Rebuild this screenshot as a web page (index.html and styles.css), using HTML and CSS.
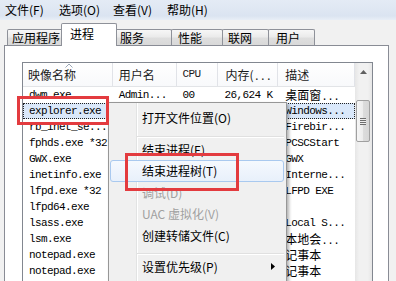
FILE: index.html
```html
<!DOCTYPE html>
<html lang="zh-CN">

<head>
    <meta charset="UTF-8">
    <meta name="viewport" content="width=device-width, initial-scale=1.0">
    <title>Windows 任务管理器</title>
    <link rel="stylesheet" href="styles.css">
</head>

<body>
    <div class="window">
        <div class="menubar">
            <span class="menubar-item">文件(F)</span>
            <span class="menubar-item">选项(O)</span>
            <span class="menubar-item">查看(V)</span>
            <span class="menubar-item">帮助(H)</span>
        </div>

        <div class="tabs">
            <div class="tab tab-apps">应用程序</div>
            <div class="tab tab-active">进程</div>
            <div class="tab tab-services">服务</div>
            <div class="tab tab-perf">性能</div>
            <div class="tab tab-net">联网</div>
            <div class="tab tab-users">用户</div>
        </div>

        <div class="panel">
            <div class="listview">
                <div class="lv-main">
                    <div class="lv-header">
                        <div class="col col-name">
                            <svg class="sort-arrow" width="8" height="5" viewBox="0 0 8 5">
                                <polyline points="0.5,4.5 4,1 7.5,4.5" fill="none" stroke="#9aa6b6" stroke-width="1"/>
                            </svg>
                            映像名称
                        </div>
                        <div class="col col-user">用户名</div>
                        <div class="col col-cpu mono">CPU</div>
                        <div class="col col-mem">内存(<span class="mono">...</span></div>
                        <div class="col col-desc">描述</div>
                    </div>

                    <div class="lv-body">
                        <div class="row">
                            <div class="col col-name">dwm.exe</div>
                            <div class="col col-user">Admin...</div>
                            <div class="col col-cpu">00</div>
                            <div class="col col-mem">26,624 K</div>
                            <div class="col col-desc"><span class="cjk">桌面窗</span>...</div>
                        </div>
                        <div class="row row-selected">
                            <div class="col col-name">explorer.exe</div>
                            <div class="col col-user"></div>
                            <div class="col col-cpu"></div>
                            <div class="col col-mem"></div>
                            <div class="col col-desc">Windows...</div>
                        </div>
                        <div class="row">
                            <div class="col col-name">rb_inet_se...</div>
                            <div class="col col-user"></div>
                            <div class="col col-cpu"></div>
                            <div class="col col-mem"></div>
                            <div class="col col-desc">Firebir...</div>
                        </div>
                        <div class="row">
                            <div class="col col-name">fphds.exe *32</div>
                            <div class="col col-user"></div>
                            <div class="col col-cpu"></div>
                            <div class="col col-mem"></div>
                            <div class="col col-desc">PCSCStart</div>
                        </div>
                        <div class="row">
                            <div class="col col-name">GWX.exe</div>
                            <div class="col col-user"></div>
                            <div class="col col-cpu"></div>
                            <div class="col col-mem"></div>
                            <div class="col col-desc">GWX</div>
                        </div>
                        <div class="row">
                            <div class="col col-name">inetinfo.exe</div>
                            <div class="col col-user"></div>
                            <div class="col col-cpu"></div>
                            <div class="col col-mem"></div>
                            <div class="col col-desc">Interne...</div>
                        </div>
                        <div class="row">
                            <div class="col col-name">lfpd.exe *32</div>
                            <div class="col col-user"></div>
                            <div class="col col-cpu"></div>
                            <div class="col col-mem"></div>
                            <div class="col col-desc">LFPD EXE</div>
                        </div>
                        <div class="row">
                            <div class="col col-name">lfpd64.exe</div>
                            <div class="col col-user"></div>
                            <div class="col col-cpu"></div>
                            <div class="col col-mem"></div>
                            <div class="col col-desc"></div>
                        </div>
                        <div class="row">
                            <div class="col col-name">lsass.exe</div>
                            <div class="col col-user"></div>
                            <div class="col col-cpu"></div>
                            <div class="col col-mem"></div>
                            <div class="col col-desc">Local S...</div>
                        </div>
                        <div class="row">
                            <div class="col col-name">lsm.exe</div>
                            <div class="col col-user"></div>
                            <div class="col col-cpu"></div>
                            <div class="col col-mem"></div>
                            <div class="col col-desc"><span class="cjk">本地会</span>...</div>
                        </div>
                        <div class="row">
                            <div class="col col-name">notepad.exe</div>
                            <div class="col col-user"></div>
                            <div class="col col-cpu"></div>
                            <div class="col col-mem"></div>
                            <div class="col col-desc"><span class="cjk">记事本</span></div>
                        </div>
                        <div class="row">
                            <div class="col col-name">notepad.exe</div>
                            <div class="col col-user"></div>
                            <div class="col col-cpu"></div>
                            <div class="col col-mem"></div>
                            <div class="col col-desc"><span class="cjk">记事本</span></div>
                        </div>
                    </div>
                </div>

                <div class="scrollbar">
                    <div class="sb-button">
                        <svg width="7" height="4" viewBox="0 0 7 4">
                            <polygon points="0,4 3.5,0 7,4" fill="#606060"/>
                        </svg>
                    </div>
                    <div class="sb-thumb">
                        <span class="grip"></span>
                    </div>
                </div>
            </div>
        </div>

        <!-- 右键菜单 -->
        <div class="context-menu">
            <div class="menu-item">打开文件位置(O)</div>
            <div class="menu-sep"></div>
            <div class="menu-item">结束进程(E)</div>
            <div class="menu-item menu-item-hover">结束进程树(T)</div>
            <div class="menu-item menu-item-disabled">调试(D)</div>
            <div class="menu-item menu-item-disabled">UAC 虚拟化(V)</div>
            <div class="menu-item">创建转储文件(C)</div>
            <div class="menu-sep"></div>
            <div class="menu-item menu-item-sub">
                设置优先级(P)
                <svg width="4" height="7" viewBox="0 0 4 7">
                    <polygon points="0,0 4,3.5 0,7" fill="#000"/>
                </svg>
            </div>
        </div>

        <!-- 标注框 -->
        <div class="mark mark-process"></div>
        <div class="mark mark-tree"></div>
    </div>
</body>

</html>
```

FILE: styles.css
```css
* {
    box-sizing: border-box;
}

body {
    margin: 0;
    width: 396px;
    height: 281px;
    overflow: hidden;
    font-family: "Noto Sans CJK SC", "Liberation Sans", sans-serif;
    font-size: 12px;
    color: #000;
    background: #f0f0f0;
}

.window {
    position: relative;
    width: 396px;
    height: 281px;
    overflow: hidden;
    background: #f1f1f1;
}

.menubar {
    display: flex;
    height: 20px;
    padding-left: 5px;
    line-height: 20px;
    background: linear-gradient(#e4ebf5, #dbe4f1 80%, #e8eef7);
}

.menubar-item {
    width: 54px;
    white-space: nowrap;
}

.tabs {
    display: flex;
    align-items: flex-end;
    height: 25px;
    padding-left: 7px;
}

.tab {
    height: 16px;
    margin-right: -1px;
    padding-left: 4px;
    border: 1px solid #8e9199;
    border-bottom: none;
    border-radius: 2px 2px 0 0;
    line-height: 15px;
    white-space: nowrap;
    background: linear-gradient(#f7f7f7, #ebebeb 45%, #dedede 55%, #d9d9d9);
}

.tab-apps { width: 57px; }
.tab-services { width: 58px; padding-left: 5px; }
.tab-perf { width: 52px; padding-left: 6px; }
.tab-net { width: 47px; padding-left: 5px; }
.tab-users { width: 47px; padding-left: 7px; }

.tab-active {
    position: relative;
    z-index: 1;
    width: 56px;
    height: 23px;
    margin: 0 -3px -1px -2px;
    padding-left: 8px;
    line-height: 20px;
    background: #fff;
}

.panel {
    width: 385px;
    height: 250px;
    margin-left: 4px;
    padding: 16px 0 0 17px;
    border: 1px solid #898c95;
    background: #fff;
}

.listview {
    display: flex;
    width: 351px;
    height: 240px;
    border: 1px solid #828790;
    background: #fff;
}

.lv-main {
    flex: 1;
    overflow: hidden;
}

.lv-header {
    display: flex;
    height: 24px;
    border-bottom: 1px solid #e2e4e7;
    background: linear-gradient(#fff, #f8f9fb);
}

.lv-header .col {
    position: relative;
    line-height: 23px;
    border-right: 1px solid #e1e3e8;
    color: #1b1b1b;
}

.lv-header .col-name {
    padding-left: 5px;
}

.lv-header .col-mem {
    text-align: left;
    padding-right: 0;
    padding-left: 7px;
}

.sort-arrow {
    position: absolute;
    left: 42px;
    top: 0;
}

.col {
    padding-left: 6px;
    white-space: nowrap;
    overflow: hidden;
}

.col-name { width: 90px; }
.col-user { width: 64px; }
.col-cpu { width: 42px; }
.col-mem { width: 60px; padding-right: 6px; text-align: right; }
.col-desc { width: 77px; padding-left: 7px; }

.mono,
.row {
    font-family: "Liberation Mono", monospace;
    font-size: 11px;
    letter-spacing: -0.6px;
}

.row {
    display: flex;
    height: 16px;
    line-height: 16px;
}

.row-selected {
    background: #dae8fa;
    outline: 1px dotted #222;
    outline-offset: -1px;
}

.cjk {
    font-family: "Noto Sans CJK SC", sans-serif;
    font-size: 12px;
    letter-spacing: 0;
}

.scrollbar {
    display: flex;
    flex-direction: column;
    width: 17px;
    background: linear-gradient(90deg, #e6e6e6, #f1f1f1 25%, #f1f1f1 75%, #e6e6e6);
}

.sb-button {
    display: flex;
    align-items: center;
    justify-content: center;
    height: 17px;
}

.sb-thumb {
    display: flex;
    align-items: center;
    justify-content: center;
    height: 42px;
    margin: 20px 2px 0 1px;
    border: 1px solid #a0a0a0;
    border-radius: 2px;
    background: linear-gradient(90deg, #f6f6f6, #ececec 50%, #dcdcdc 52%, #d6d6d6);
}

.grip {
    width: 6px;
    height: 7px;
    background: repeating-linear-gradient(#6e6e6e 0, #6e6e6e 1px, #eeeeee 1px, #eeeeee 2px);
}

/* 右键菜单 */
.context-menu {
    position: absolute;
    left: 108px;
    top: 102px;
    width: 179px;
    height: 200px;
    padding: 4px 2px 0 1px;
    border: 1px solid #979797;
    background: linear-gradient(90deg, #f0f0f0 27px, #e2e3e3 27px, #e2e3e3 28px, #fff 28px, #fff 29px, #f0f0f0 29px);
    box-shadow: 2px 2px 3px rgba(0, 0, 0, 0.3);
}

.menu-item {
    display: flex;
    align-items: center;
    height: 21.5px;
    padding-left: 31px;
    border: 1px solid transparent;
    border-radius: 3px;
    white-space: nowrap;
}

.menu-item-hover {
    border-color: #a9c9ef;
    background: linear-gradient(#f5f9fe, #e8f0fb);
}

.menu-item-disabled {
    color: #a0a0a0;
}

.menu-item-sub {
    justify-content: space-between;
    padding-right: 8px;
}

.menu-sep {
    height: 10px;
    margin-left: 27px;
    background: linear-gradient(transparent 7px, #e0e0e0 7px, #e0e0e0 8px, #fff 8px, #fff 9px, transparent 9px);
}

/* 红色标注 */
.mark {
    position: absolute;
    border: 3px solid #e33b3f;
}

.mark-process {
    left: 17px;
    top: 96px;
    width: 92px;
    height: 29px;
}

.mark-tree {
    left: 125px;
    top: 153px;
    width: 114px;
    height: 38px;
}
```
